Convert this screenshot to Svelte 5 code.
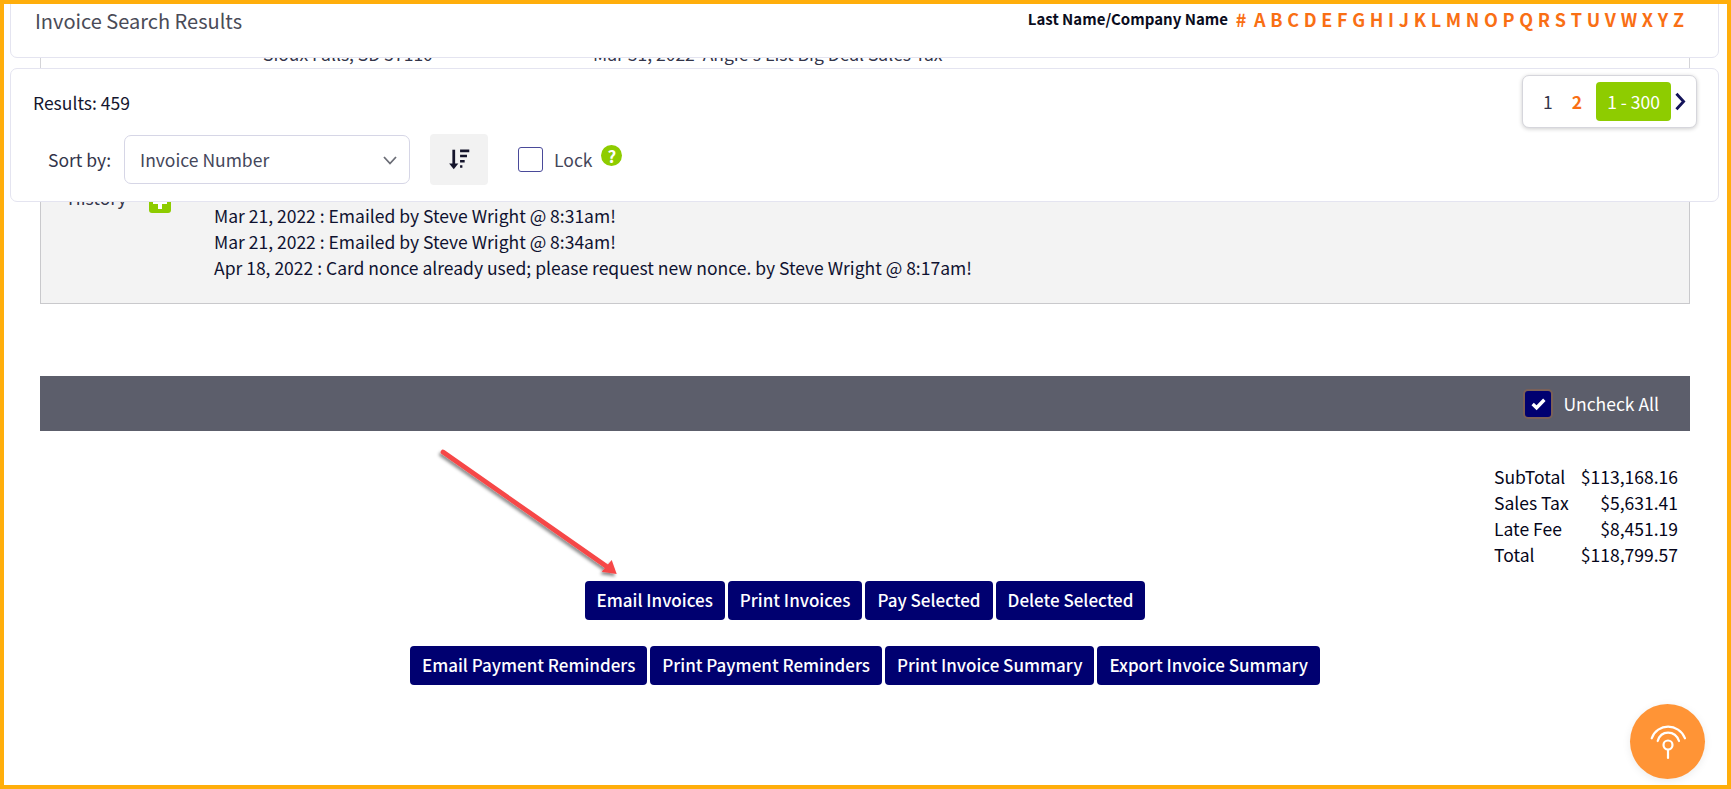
<script>
  const letters = '# A B C D E F G H I J K L M N O P Q R S T U V W X Y Z'.split(' ');
  const history = [
    'Mar 21, 2022 : Emailed by Steve Wright @ 8:31am!',
    'Mar 21, 2022 : Emailed by Steve Wright @ 8:34am!',
    'Apr 18, 2022 : Card nonce already used; please request new nonce. by Steve Wright @ 8:17am!'
  ];
  const totals = [
    ['SubTotal', '$113,168.16'],
    ['Sales Tax', '$5,631.41'],
    ['Late Fee', '$8,451.19'],
    ['Total', '$118,799.57']
  ];
  const row1 = ['Email Invoices', 'Print Invoices', 'Pay Selected', 'Delete Selected'];
  const row2 = ['Email Payment Reminders', 'Print Payment Reminders', 'Print Invoice Summary', 'Export Invoice Summary'];
</script>

<div class="frame">
  <main class="content">
    <div class="record">
      <div class="address">
        <span class="city">Sioux Falls, SD 57110</span>
        <span class="due">Mar 31, 2022&nbsp; Angie's List Big Deal Sales Tax</span>
      </div>
    </div>
    <section class="panel">
      <div class="hist-label">History</div>
      <div class="plus">
        <svg viewBox="0 0 22 22" width="22" height="22"><rect width="22" height="22" rx="3" fill="#8ecc00"/><path d="M11 4v14M4 11h14" stroke="#fff" stroke-width="4"/></svg>
      </div>
      <div class="hist-lines">
        {#each history as line}<div>{line}</div>{/each}
      </div>
    </section>
    <div class="bar">
      <span class="check-on">
        <svg viewBox="0 0 16 16" width="17" height="17"><path d="M2.500 8.500l3.700 3.500 7.300-7.500" fill="none" stroke="#fff" stroke-width="3.200"/></svg>
      </span>
      <span>Uncheck All</span>
    </div>
    <div class="totals">
      {#each totals as t}
        <span class="t-label">{t[0]}</span><span class="t-val">{t[1]}</span>
      {/each}
    </div>
    <div class="actions">
      {#each row1 as b}<button>{b}</button>{/each}
    </div>
    <div class="actions second">
      {#each row2 as b}<button>{b}</button>{/each}
    </div>
  </main>

  <header class="card title-card">
    <h1>Invoice Search Results</h1>
    <nav class="alpha">
      <span class="alpha-label">Last Name/Company Name</span>
      {#each letters as l}<span class="letter">{l}</span>{/each}
    </nav>
  </header>

  <section class="card tools">
    <div class="results">Results: 459</div>
    <div class="sort-row">
      <span class="sort-label">Sort by:</span>
      <div class="select">
        <span>Invoice Number</span>
        <svg viewBox="0 0 16 16" width="16" height="16"><path d="M2 5l6 6.500L14 5" fill="none" stroke="#6b6d76" stroke-width="1.800"/></svg>
      </div>
      <div class="sort-btn">
        <svg viewBox="0 0 20 20" width="23" height="23"><path d="M5 1.500V16" stroke="#14142b" stroke-width="2.400"/><path d="M1 13.500h8L5 18.500z" fill="#14142b"/><path d="M10.500 2.500h8M10.500 7h6M10.500 11.500h4M10.500 16h2" stroke="#14142b" stroke-width="2.200"/></svg>
      </div>
      <span class="box"></span>
      <span class="lock">Lock</span>
      <span class="help">?</span>
    </div>
    <div class="pager">
      <span class="p1">1</span>
      <span class="p2">2</span>
      <span class="range">1 - 300</span>
      <svg viewBox="0 0 10 16" width="12" height="19"><path d="M2 1.500L8 8l-6 6.500" fill="none" stroke="#14145a" stroke-width="2.400"/></svg>
    </div>
  </section>

  <svg class="arrow" viewBox="0 0 200 140" width="200" height="140">
    <defs>
      <filter id="sh" x="-20%" y="-20%" width="140%" height="140%"><feDropShadow dx="-1.500" dy="2.500" stdDeviation="1.800" flood-color="#000" flood-opacity=".45"/></filter>
    </defs>
    <g filter="url(#sh)">
      <path d="M9 8L172 122" stroke="#f64747" stroke-width="4.700" stroke-linecap="round" fill="none"/>
      <path d="M167.700 127.700L182.700 130L177.700 116z" fill="#f64747"/>
    </g>
  </svg>

  <div class="fab">
    <svg viewBox="0 0 40 40" width="40" height="40" fill="none" stroke="#fff" stroke-width="2.200" stroke-linecap="round">
      <path d="M3.700 16.300C9 0.800 31 0.800 37 16.300"/>
      <path d="M9.700 19C13 7.900 27 7.900 31 19"/>
      <circle cx="20" cy="23" r="4.500"/>
      <path d="M20 28v8"/>
    </svg>
  </div>
</div>

<style>
  :global(body) { margin: 0; background: #fff; }
  .frame {
    position: relative;
    box-sizing: border-box;
    width: 1731px;
    height: 789px;
    border: 4px solid #ffae0b;
    overflow: hidden;
    background: #fff;
    font-family: "Noto Sans CJK SC", "Noto Sans", sans-serif;
    font-size: 17.500px;
    line-height: 26px;
    color: #0f1230;
  }
  .content { padding: 0 37px 0 36px; }
  .record {
    box-sizing: border-box;
    height: 172px;
    padding-top: 37px;
    border-left: 1px solid #d4d4d8;
    border-right: 1px solid #d4d4d8;
  }
  .address { display: flex; color: #33354a; }
  .city { margin-left: 222px; width: 330px; }
  .panel {
    box-sizing: border-box;
    height: 128px;
    padding: 8px 0 0 27px;
    display: flex;
    background: #f3f3f3;
    border: 1px solid #c9c9cc;
  }
  .hist-label { width: 81px; color: #33354a; }
  .plus { width: 65px; margin-top: 6px; }
  .plus svg { display: block; }
  .hist-lines { margin-top: 18px; }
  .bar {
    margin-top: 72px;
    height: 55px;
    box-sizing: border-box;
    padding-right: 31px;
    display: flex;
    align-items: center;
    justify-content: flex-end;
    gap: 12px;
    background: #5c5e6b;
    color: #fff;
  }
  .check-on {
    box-sizing: border-box;
    width: 26px;
    height: 26px;
    display: flex;
    align-items: center;
    justify-content: center;
    background: #000070;
    border-radius: 3px;
    box-shadow: 0 0 0 2px #7a6058;
  }
  .totals {
    margin: 33px 12px 0 auto;
    width: 184px;
    display: grid;
    grid-template-columns: auto 1fr;
    color: #05061a;
  }
  .t-label { white-space: nowrap; }
  .t-val { text-align: right; white-space: nowrap; }
  .actions {
    margin-top: 13px;
    display: flex;
    justify-content: center;
    gap: 3px;
  }
  .actions.second { margin-top: 26px; }
  button {
    height: 39px;
    padding: 0 12px 2px;
    border: 0;
    border-radius: 4px;
    background: #000070;
    color: #fff;
    font: 500 17px/26px "Noto Sans CJK SC", "Noto Sans", sans-serif;
  }
  .card {
    position: absolute;
    left: 6px;
    right: 8px;
    box-sizing: border-box;
    background: #fff;
    border: 1px solid #e4e4f0;
    border-radius: 7px;
  }
  .title-card {
    top: -12px;
    height: 66px;
    padding: 13px 34px 0 24px;
    display: flex;
    justify-content: space-between;
    align-items: flex-start;
  }
  h1 {
    margin: 0;
    font-size: 20px;
    font-weight: 400;
    line-height: 30px;
    color: #4a4b57;
  }
  .alpha { display: flex; align-items: center; height: 26px; font-size: 15px; font-weight: 700; }
  .alpha-label { margin-right: 3px; color: #0a0c20; }
  .letter { margin-left: 4.700px; color: #f96f14; font-size: 18px; font-weight: 700; }
  .letter:nth-child(2) { margin-right: 3px; }
  .tools { top: 64px; height: 134px; padding: 21px 0 0 22px; }
  .results { line-height: 26px; color: #14162e; }
  .sort-row { display: flex; align-items: center; margin: 19px 0 0 15px; height: 49px; }
  .sort-label { width: 76px; color: #33354a; }
  .select {
    box-sizing: border-box;
    width: 286px;
    height: 49px;
    padding: 0 11px 0 15px;
    display: flex;
    align-items: center;
    justify-content: space-between;
    border: 1px solid #d6d6e6;
    border-radius: 7px;
    color: #44465a;
  }
  .sort-btn {
    width: 58px;
    height: 51px;
    margin-left: 20px;
    display: flex;
    align-items: center;
    justify-content: center;
    background: #f2f2f2;
    border-radius: 4px;
  }
  .box {
    box-sizing: border-box;
    width: 25px;
    height: 25px;
    margin-left: 30px;
    border: 1.500px solid #4a4a9a;
    border-radius: 3px;
  }
  .lock { margin-left: 11px; color: #44465a; }
  .help {
    width: 21px;
    height: 21px;
    margin: -8px 0 0 9px;
    border-radius: 50%;
    background: #8ecc00;
    color: #fff;
    font-size: 17px;
    font-weight: 700;
    line-height: 21px;
    text-align: center;
  }
  .pager {
    position: absolute;
    top: 6px;
    right: 21px;
    box-sizing: border-box;
    width: 175px;
    height: 53px;
    padding: 0 0 0 20px;
    display: flex;
    align-items: center;
    background: #fff;
    border: 1px solid #d6d6dc;
    border-radius: 7px;
    box-shadow: 0 1px 4px rgba(0, 0, 0, .2);
  }
  .p1 { color: #33354a; }
  .p2 { margin-left: 19px; color: #f96f14; font-weight: 700; }
  .range {
    width: 75px;
    height: 39px;
    margin-left: 14px;
    line-height: 39px;
    text-align: center;
    background: #8ecc00;
    color: #fff;
    border-radius: 4px;
  }
  .pager svg { margin-left: 3px; }
  .arrow { position: absolute; left: 430px; top: 440px; }
  .fab {
    position: absolute;
    left: 1626px;
    top: 700px;
    width: 75px;
    height: 75px;
    display: flex;
    align-items: center;
    justify-content: center;
    border-radius: 50%;
    background: #ff9436;
    box-shadow: 0 2px 8px rgba(0, 0, 0, .08);
  }
</style>
